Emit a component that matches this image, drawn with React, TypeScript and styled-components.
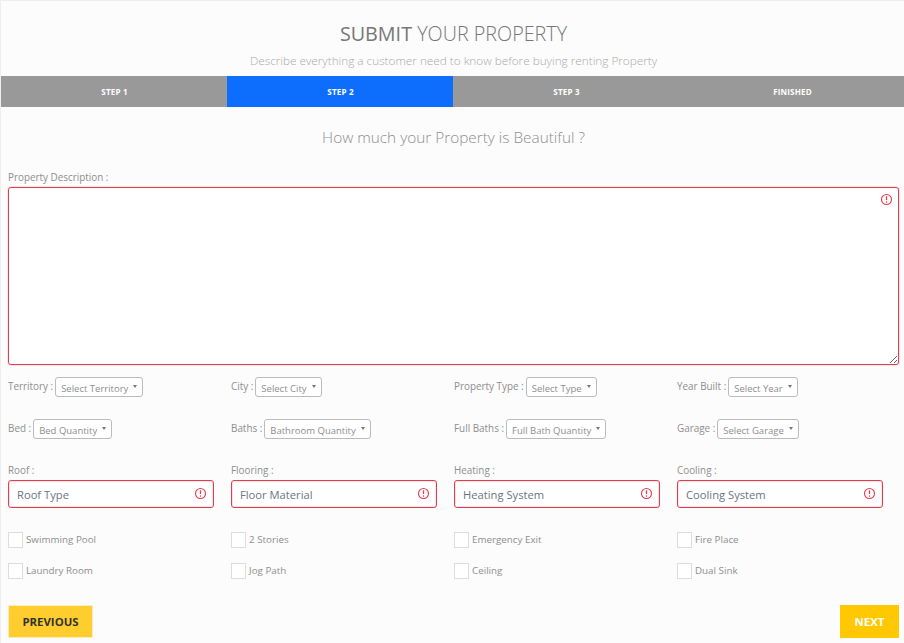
// Submit Property, step 2

import * as React from 'react'
import styled, { createGlobalStyle } from 'styled-components'

// ___________________________________________________________________

const steps = ['Step 1', 'Step 2', 'Step 3', 'Finished']

const selectRows = [
  [
    { label: 'Territory :', value: 'Select Territory' },
    { label: 'City :', value: 'Select City' },
    { label: 'Property Type :', value: 'Select Type' },
    { label: 'Year Built :', value: 'Select Year' }
  ],
  [
    { label: 'Bed :', value: 'Bed Quantity' },
    { label: 'Baths :', value: 'Bathroom Quantity' },
    { label: 'Full Baths :', value: 'Full Bath Quantity' },
    { label: 'Garage :', value: 'Select Garage' }
  ]
]

const inputs = [
  { label: 'Roof :', placeholder: 'Roof Type' },
  { label: 'Flooring :', placeholder: 'Floor Material' },
  { label: 'Heating :', placeholder: 'Heating System' },
  { label: 'Cooling :', placeholder: 'Cooling System' }
]

const checks = [
  'Swimming Pool',
  '2 Stories',
  'Emergency Exit',
  'Fire Place',
  'Laundry Room',
  'Jog Path',
  'Ceiling',
  'Dual Sink'
]

// ___________________________________________________________________

const AlertIcon: React.FC = () => (
  <svg width="13" height="13" viewBox="0 0 13 13" fill="none">
    <circle cx="6.5" cy="6.5" r="5" stroke="#e03e50" strokeWidth="1.1" />
    <path d="M6.5 3.3v3.8" stroke="#e03e50" strokeWidth="1.3" />
    <circle cx="6.5" cy="9" r="0.75" fill="#e03e50" />
  </svg>
)

const App: React.FC = () => (
  <Page>
    <GlobalStyle />
    <Header>
      <Title>
        <strong>SUBMIT</strong> YOUR PROPERTY
      </Title>
      <Subtitle>
        Describe everything a customer need to know before buying renting
        Property
      </Subtitle>
    </Header>

    <Steps>
      {steps.map((step, i) => (
        <Step key={step} $active={i === 1}>
          {step}
        </Step>
      ))}
    </Steps>

    <Question>How much your Property is Beautiful ?</Question>

    <Form>
      <Label>Property Description :</Label>
      <TextareaWrap>
        <Textarea />
        <TextareaAlert>
          <AlertIcon />
        </TextareaAlert>
      </TextareaWrap>

      {selectRows.map((row, i) => (
        <SelectRow key={i}>
          {row.map((item) => (
            <SelectField key={item.label}>
              <InlineLabel>{item.label}</InlineLabel>
              <Select>
                {item.value}
                <Caret />
              </Select>
            </SelectField>
          ))}
        </SelectRow>
      ))}

      <InputRow>
        {inputs.map((item) => (
          <Field key={item.label}>
            <Label>{item.label}</Label>
            <InputWrap>
              <Input placeholder={item.placeholder} />
              <InputAlert>
                <AlertIcon />
              </InputAlert>
            </InputWrap>
          </Field>
        ))}
      </InputRow>

      <CheckGrid>
        {checks.map((check) => (
          <CheckItem key={check}>
            <CheckBox />
            {check}
          </CheckItem>
        ))}
      </CheckGrid>

      <Actions>
        <Previous>Previous</Previous>
        <Next>Next</Next>
      </Actions>
    </Form>
  </Page>
)

export default App

// ___________________________________________________________________

const GlobalStyle = createGlobalStyle`
  html, body {
    margin: 0;
    height: 100%;
    background: #fcfcfc;
  }

  * {
    box-sizing: border-box;
  }
`

const Page = styled.div`
  width: 904px;
  height: 643px;
  overflow: hidden;
  border-top: 1px solid #eeeeee;
  border-left: 1px solid #eeeeee;
  background: #fcfcfc;
  font-family: 'Open Sans', sans-serif;
  color: #8e8e8e;
`

const Header = styled.header`
  height: 75px;
  padding: 18px 0 0 2px;
  text-align: center;
`

const Title = styled.h1`
  margin: 0;
  font-size: 19.75px;
  line-height: 30px;
  font-weight: 300;
  color: #777777;

  strong {
    font-weight: 400;
  }
`

const Subtitle = styled.p`
  margin: 3px 0 0;
  font-size: 11.75px;
  line-height: 16px;
  font-weight: 300;
  color: #aaaaaa;
`

const Steps = styled.div`
  display: grid;
  grid-template-columns: repeat(4, 226px);
  height: 31px;
  background: #999999;
`

const Step = styled.div<{ $active?: boolean }>`
  display: flex;
  align-items: center;
  justify-content: center;
  padding-left: 1px;
  background: ${(p) => (p.$active ? '#0d6efd' : '#999999')};
  color: #ffffff;
  font-size: 8px;
  font-weight: 700;
  letter-spacing: 0.2px;
  text-transform: uppercase;
`

const Question = styled.h2`
  margin: 19px 0 0;
  padding-left: 2px;
  font-size: 15.35px;
  line-height: 22px;
  font-weight: 300;
  text-align: center;
  color: #8e8e8e;
`

const Form = styled.form`
  padding: 22px 4px 0 7px;
`

const Label = styled.label`
  display: block;
  font-size: 9.9px;
  line-height: 14px;
  color: #8e8e8e;
`

const TextareaWrap = styled.div`
  position: relative;
  margin-top: 3px;
  height: 178px;
`

const Textarea = styled.textarea`
  display: block;
  width: 891px;
  height: 178px;
  border: 1px solid #e03e50;
  border-radius: 3px;
  box-shadow: 0 0 0 1px rgba(220, 53, 69, 0.12);
  background: #ffffff;
  outline: none;
  resize: vertical;
`

const TextareaAlert = styled.span`
  position: absolute;
  top: 6px;
  right: 7px;
  line-height: 0;
`

const SelectRow = styled.div`
  display: grid;
  grid-template-columns: repeat(4, 223px);
  margin-top: 12px;

  & + & {
    margin-top: 22px;
  }
`

const SelectField = styled.div`
  display: flex;
  align-items: flex-start;
  gap: 2px;
`

const InlineLabel = styled.span`
  font-size: 9.9px;
  line-height: 18px;
  color: #8e8e8e;
`

const Select = styled.div`
  display: inline-flex;
  align-items: center;
  gap: 5px;
  height: 20px;
  padding: 2px 5px 0;
  border: 1px solid #bbbbbb;
  border-radius: 3px;
  background: #ffffff;
  font-size: 9.5px;
  color: #8e8e8e;
`

const Caret = styled.span`
  width: 0;
  height: 0;
  margin-top: -4px;
  border-top: 3px solid #777777;
  border-left: 2.5px solid transparent;
  border-right: 2.5px solid transparent;
`

const InputRow = styled.div`
  display: grid;
  grid-template-columns: repeat(4, 223px);
  margin-top: 24px;
`

const Field = styled.div`
  width: 206px;
`

const InputWrap = styled.div`
  position: relative;
  margin-top: 3px;
`

const Input = styled.input`
  display: block;
  width: 100%;
  height: 28px;
  padding: 1px 30px 0 8px;
  border: 1px solid #e03e50;
  border-radius: 3px;
  box-shadow: inset 0 0 0 1px rgba(220, 53, 69, 0.14);
  background: #ffffff;
  outline: none;
  font-family: inherit;
  font-size: 11.2px;
  color: #6c757d;

  &::placeholder {
    color: #6c757d;
    opacity: 1;
  }
`

const InputAlert = styled.span`
  position: absolute;
  top: 7px;
  right: 7px;
  line-height: 0;
`

const CheckGrid = styled.div`
  display: grid;
  grid-template-columns: repeat(4, 223px);
  grid-auto-rows: 31px;
  margin-top: 16px;
`

const CheckItem = styled.div`
  display: flex;
  align-items: center;
  gap: 3px;
  font-size: 9.8px;
  color: #8e8e8e;
`

const CheckBox = styled.span`
  width: 15px;
  height: 16px;
  border: 1px solid #dddddd;
  background: #ffffff;
`

const Actions = styled.div`
  display: flex;
  justify-content: space-between;
  margin-top: 19px;
`

const Button = styled.button`
  height: 33px;
  padding: 0;
  border: 1px solid #f9ecc0;
  font-family: inherit;
  font-size: 11.4px;
  font-weight: 700;
  text-transform: uppercase;
`

const Previous = styled(Button)`
  width: 85px;
  background: #ffce2e;
  color: #333333;
`

const Next = styled(Button)`
  width: 59px;
  margin-right: 1px;
  border: 0;
  background: #ffc800;
  color: #ffffff;
`
